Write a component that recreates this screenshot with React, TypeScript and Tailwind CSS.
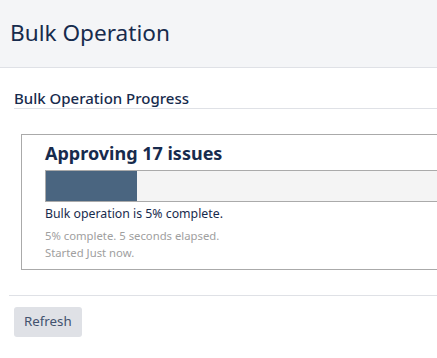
export default function App() {
  return (
    <div
      className="w-[437px] h-[358px] overflow-hidden bg-white text-[#172b4d]"
      style={{ fontFamily: '"Noto Sans", "Open Sans", sans-serif' }}
    >
      <div className="w-[700px]">
        <header className="h-[68px] bg-[#f4f5f7] border-b border-[#dfe1e6] flex items-center pl-[10px]">
          <h1 className="text-[22.6px] leading-none font-normal -mt-[1px]">Bulk Operation</h1>
        </header>

        <div className="pl-[14px] pt-[20px]">
          <h2 className="text-[15px] leading-[20px] font-medium border-b border-[#dfe1e6]">
            Bulk Operation Progress
          </h2>
        </div>

        <div className="ml-[21px] mt-[25px] border border-[#aaaaaa] pl-[23px] pt-[6px] pb-[8px]">
          <h3 className="text-[18px] leading-[24px] font-bold">Approving 17 issues</h3>
          <div className="mt-[5px] h-[32px] bg-[#f4f4f4] border-t border-b border-l border-[#aaaaaa] flex">
            <div className="w-[91px] bg-[#4a6580]"></div>
          </div>
          <p className="mt-[3px] text-[12.3px] leading-[18px]">Bulk operation is 5% complete.</p>
          <p className="mt-[5px] text-[11.3px] leading-[16.5px] text-[#a0a0a0]">5% complete. 5 seconds elapsed.</p>
          <p className="text-[11.3px] leading-[16.5px] text-[#a0a0a0]">Started Just now.</p>
        </div>

        <div className="ml-[9px] mt-[25px] border-t border-[#dfe1e6]"></div>

        <div className="pl-[14px] pt-[11px]">
          <button className="h-[30px] px-[10px] rounded-[3px] bg-[#dfe1e6] text-[13.3px] text-[#42526e]">
            Refresh
          </button>
        </div>
      </div>
    </div>
  );
}
